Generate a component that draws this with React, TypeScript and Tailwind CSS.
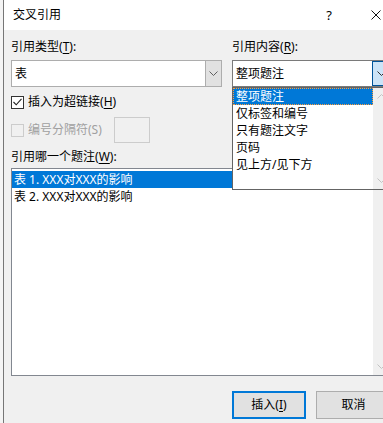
import React from 'react';

const font = { fontFamily: '"Noto Sans", "Noto Sans CJK SC", sans-serif' };

function Chevron({ color = '#606060' }: { color?: string }) {
  return (
    <svg width="9" height="5" viewBox="0 0 9 5" fill="none">
      <polyline points="0.5,0.5 4.5,4.5 8.5,0.5" stroke={color} strokeWidth="1" />
    </svg>
  );
}

function ChevronUp({ color = '#c2c2c2' }: { color?: string }) {
  return (
    <svg width="9" height="5" viewBox="0 0 9 5" fill="none">
      <polyline points="0.5,4.5 4.5,0.5 8.5,4.5" stroke={color} strokeWidth="1" />
    </svg>
  );
}

function Key({ k }: { k: string }) {
  return (
    <>
      (<span className="underline underline-offset-2">{k}</span>)
    </>
  );
}

const contentOptions = ['整项题注', '仅标签和编号', '只有题注文字', '页码', '见上方/见下方'];
const captions = ['表 1. XXX对XXX的影响', '表 2. XXX对XXX的影响'];

export default function App() {
  return (
    <div
      className="relative flex h-[423px] w-[383px] overflow-hidden bg-[#f0f0f0] text-[12px] leading-4 text-black"
      style={font}
    >
      <div className="w-[3px] shrink-0 bg-[#f4f4f4]" />
      <div className="w-px shrink-0 bg-[#767676]" />
      <div className="relative flex w-[400px] shrink-0 flex-col">
        {/* title bar */}
        <div className="flex h-[30px] items-center bg-white pl-[9px]">
          <span className="text-[12px]">交叉引用</span>
          <span className="ml-auto mr-[39px] text-[13px]">?</span>
          <svg width="10" height="10" viewBox="0 0 10 10" className="mr-[23px]">
            <path d="M0.5 0.5 L9.5 9.5 M9.5 0.5 L0.5 9.5" stroke="#111" strokeWidth="1" />
          </svg>
        </div>

        {/* body */}
        <div className="flex flex-col pl-[7px]">
          <div className="mt-[9px] flex">
            <div className="w-[221px]">
              引用类型<Key k="T" />:
            </div>
            <div>
              引用内容<Key k="R" />:
            </div>
          </div>

          <div className="mt-[5px] flex h-[27px]">
            <div className="flex w-[211px] border border-[#adadad] bg-white">
              <div className="flex flex-1 items-center pl-[3px]">表</div>
              <div className="flex w-[16px] items-center justify-center border-l border-[#adadad] bg-[#e1e1e1]">
                <Chevron />
              </div>
            </div>
            <div className="ml-[10px] flex w-[159px] border border-[#7a7a7a] bg-white">
              <div className="flex flex-1 items-center pl-[3px]">整项题注</div>
              <div className="flex w-[18px] items-center justify-center border border-[#005499] bg-[#cce4f7]">
                <Chevron color="#303030" />
              </div>
            </div>
          </div>

          <div className="mt-[7px] flex h-[16px] items-center">
            <div className="flex h-[13px] w-[13px] items-center justify-center border border-[#333] bg-white">
              <svg width="9" height="8" viewBox="0 0 9 8" fill="none">
                <polyline points="0.5,4 3.2,6.8 8.5,0.8" stroke="#222" strokeWidth="1.1" />
              </svg>
            </div>
            <span className="ml-[4px]">
              插入为超链接<Key k="H" />
            </span>
          </div>

          <div className="mt-[7px] flex h-[26px] items-center">
            <div className="h-[13px] w-[13px] border border-[#cccccc] bg-[#f0f0f0]" />
            <span className="ml-[4px] text-[#a0a0a0]">编号分隔符(S)</span>
            <div className="ml-[12px] h-[26px] w-[36px] border border-[#cccccc] bg-[#f0f0f0]" />
          </div>

          <div className="mt-[6px]">
            引用哪一个题注<Key k="W" />:
          </div>

          <div className="mt-[3px] flex h-[208px] w-[380px] border border-[#828790] bg-white">
            <div className="flex flex-1 flex-col pt-[2px]">
              {captions.map((c, i) => (
                <div
                  key={c}
                  className={
                    i === 0
                      ? 'flex h-[17px] items-center bg-[#0078d7] pl-[2px] text-white'
                      : 'flex h-[17px] items-center pl-[2px]'
                  }
                >
                  {c}
                </div>
              ))}
            </div>
            <div className="flex w-[17px] flex-col items-center justify-between bg-[#f0f0f0] py-[6px]">
              <ChevronUp />
              <Chevron color="#c2c2c2" />
            </div>
          </div>

          <div className="mt-[15px] flex">
            <div className="ml-[221px] flex h-[28px] w-[74px] items-center justify-center border-2 border-[#0078d7] bg-[#e1e1e1]">
              插入<Key k="I" />
            </div>
            <div className="ml-[10px] flex h-[28px] w-[75px] items-center justify-center border border-[#adadad] bg-[#e1e1e1]">
              取消
            </div>
          </div>
        </div>

        {/* open dropdown list */}
        <div className="absolute left-[228px] top-[87px] flex h-[103px] w-[159px] border border-[#646464] bg-white">
          <div className="flex flex-1 flex-col">
            {contentOptions.map((o, i) => (
              <div
                key={o}
                className={
                  i === 0
                    ? 'flex h-[17px] items-center border border-dotted border-[#ff9d3b] bg-[#0078d7] pl-[2px] text-white'
                    : 'flex h-[17px] items-center pl-[3px]'
                }
              >
                {o}
              </div>
            ))}
          </div>
          <div className="flex w-[17px] flex-col items-center justify-between bg-[#f0f0f0] py-[6px]">
            <ChevronUp />
            <Chevron color="#c2c2c2" />
          </div>
        </div>
      </div>
    </div>
  );
}
